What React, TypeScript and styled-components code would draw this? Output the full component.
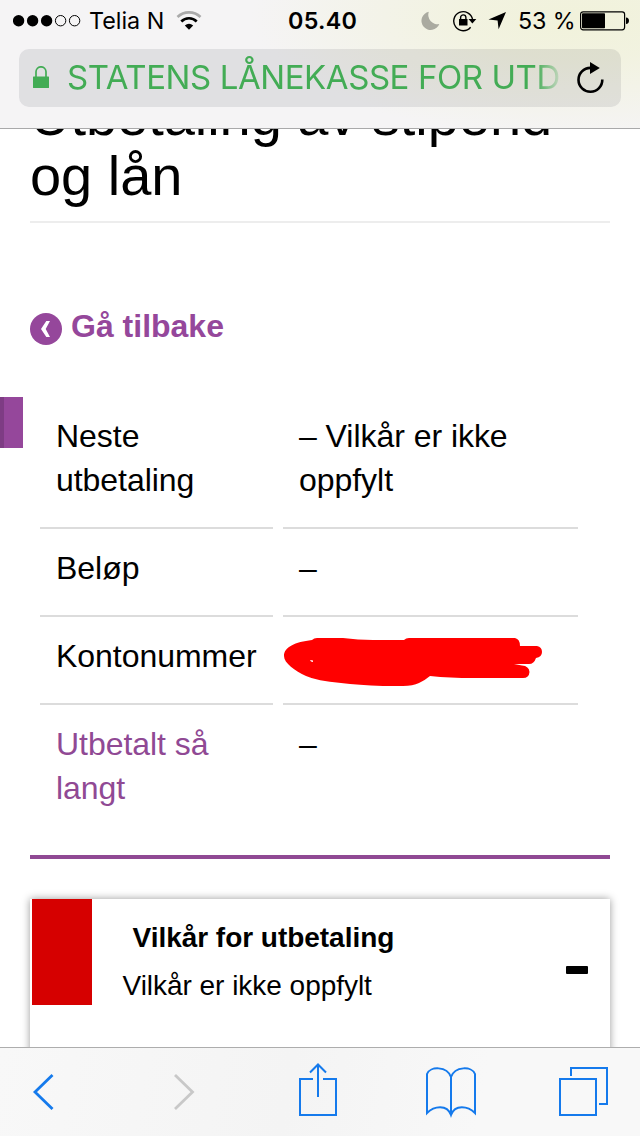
import React from "react";
import styled, { createGlobalStyle } from "styled-components";

const purple = "#95479b";
const blue = "#157aec";
const bodyFont = '"Liberation Sans", Arial, sans-serif';
const systemFont = 'Inter, Roboto, sans-serif';

const GlobalStyle = createGlobalStyle`
  * { box-sizing: border-box; }
  body { margin: 0; background: #fff; color: #000; }
  svg { display: block; flex: none; }
`;

const Screen = styled.div`
  width: 640px;
  height: 1136px;
  display: flex;
  flex-direction: column;
  overflow: hidden;
  font-family: ${bodyFont};
`;

const BrowserHeader = styled.header`
  flex: none;
  height: 129px;
  border-bottom: 1px solid #a9a9aa;
  background:
    radial-gradient(ellipse 330px 120px at 580px 18px, #f1f2db 0%, rgba(241, 242, 219, 0.8) 35%, rgba(241, 242, 219, 0) 100%),
    #f5f4f5;
  font-family: ${systemFont};
`;

const StatusBar = styled.div`
  height: 49px;
  display: grid;
  grid-template-columns: 288px 133px 1fr;
  align-items: start;
`;

const StatusGroup = styled.div<{ $left?: number }>`
  height: 41px;
  display: flex;
  align-items: center;
  padding-left: ${(p) => p.$left ?? 0}px;
`;

const StatusText = styled.span<{ $width: number; $strong?: boolean; $spacing?: number }>`
  flex: none;
  width: ${(p) => p.$width}px;
  font-size: 23.3px;
  line-height: 41px;
  font-weight: ${(p) => (p.$strong ? 600 : 400)};
  letter-spacing: ${(p) => p.$spacing ?? 0}px;
  white-space: nowrap;
`;

const AddressBar = styled.div`
  height: 58px;
  margin: 0 19px;
  padding: 0 16px 0 14px;
  display: flex;
  align-items: center;
  border-radius: 10px;
  background: rgba(10, 15, 30, 0.085);
`;

const SiteName = styled.span`
  width: 494px;
  margin: 0 17px;
  overflow: hidden;
  white-space: nowrap;
  font-size: 33px;
  line-height: 54px;
  height: 56px;
  letter-spacing: -0.43px;
  color: #43ac55;
  mask-image: linear-gradient(to right, #000 468px, transparent 498px);
`;

const Page = styled.main`
  flex: 1;
  min-height: 0;
  overflow: hidden;
  padding: 0 30px;
`;

const Title = styled.h1`
  margin: -43px 0 0;
  height: 137px;
  font-size: 56px;
  line-height: 60px;
  font-weight: 400;
  letter-spacing: -0.04px;
  border-bottom: 2px solid #ededed;
`;

const BackLink = styled.a`
  height: 44px;
  margin-top: 81px;
  display: flex;
  align-items: center;
  gap: 9px;
  color: ${purple};
  font-size: 32px;
  line-height: 44px;
  font-weight: 700;
`;

const BackBadge = styled.span`
  width: 32px;
  height: 32px;
  margin-top: 6px;
  border-radius: 50%;
  background: ${purple};
`;

const Summary = styled.section`
  position: relative;
  height: 462px;
  margin-top: 49px;
  padding: 0 32px 0 10px;
  border-bottom: 4px solid #904994;
`;

const SideTab = styled.div`
  position: absolute;
  left: -30px;
  top: 0;
  width: 23px;
  height: 51px;
  background: ${purple};
  border-left: 4px solid #7e3c84;
`;

const SummaryRow = styled.div`
  display: grid;
  grid-template-columns: 233px 295px;
  column-gap: 10px;
`;

const Cell = styled.div<{ $accent?: boolean; $last?: boolean }>`
  padding: 17px 16px 25px;
  font-size: 32px;
  line-height: 44px;
  letter-spacing: -0.04px;
  color: ${(p) => (p.$accent ? "#904994" : "#000")};
  border-bottom: 2px solid ${(p) => (p.$last ? "transparent" : "#dcdcdc")};
`;

const Scribble = styled.svg`
  margin: -8px 0 -10px -16px;
  overflow: visible;
`;

const Card = styled.section`
  height: 220px;
  margin-top: 40px;
  padding: 0 22px 0 2px;
  display: flex;
  background: #fff;
  box-shadow: 0 0 8px rgba(0, 0, 0, 0.4);
`;

const CardFlag = styled.div`
  width: 60px;
  height: 106px;
  background: #d60000;
`;

const CardText = styled.div`
  flex: 1;
  padding: 15px 0 0 30.5px;
  font-size: 28px;
  line-height: 48px;
  letter-spacing: -0.03px;
`;

const CardTitle = styled.h2`
  margin: 0;
  padding-left: 10px;
  font-size: 28px;
  line-height: 48px;
  font-weight: 700;
`;

const Minus = styled.span`
  width: 22px;
  height: 8px;
  margin-top: 67px;
  border-radius: 1px;
  background: #000;
`;

const Toolbar = styled.nav`
  flex: none;
  height: 89px;
  padding: 13px 28px 0;
  display: grid;
  grid-template-columns: 140px 130px 127px 133px 54px;
  align-items: start;
  border-top: 1px solid #adadad;
  background: linear-gradient(100deg, #f8f8f8, #f4f4f4 45%, #f8f8f8 75%);
`;

const ToolIcon = styled.svg`
  fill: none;
  stroke: ${blue};
  stroke-width: 2;
`;

const Signal = () => (
  <svg width="76" height="14" viewBox="0 0 76 14">
    {[0, 1, 2].map((i) => (
      <circle key={i} cx={5.6 + i * 14} cy="6.7" r="5.7" />
    ))}
    {[3, 4].map((i) => (
      <circle key={i} cx={5.6 + i * 14} cy="6.7" r="5.2" fill="none" stroke="#000" strokeWidth="1" />
    ))}
  </svg>
);

const Wifi = () => (
  <svg width="26" height="20" viewBox="0 0 26 20" fill="none" strokeWidth="2.6">
    <path d="M1.500 6 A16.500 16.500 0 0 1 24.500 6" stroke="#aaa" />
    <path d="M5.300 10.500 A10.800 10.800 0 0 1 20.700 10.500" stroke="#000" />
    <path d="M8.800 14.600 Q13 10.800 17.200 14.600 L13 18.800Z" fill="#000" />
  </svg>
);

const Moon = () => (
  <svg width="19" height="20" viewBox="0 0 19 20">
    <path d="M7.800 0.800 A9.200 9.200 0 1 0 18.300 13 A9.300 9.300 0 0 1 7.800 0.800Z" fill="#aaaaa0" />
  </svg>
);

const RotationLock = () => (
  <svg width="24" height="22" viewBox="0 0 24 22" fill="none" stroke="#000">
    <path d="M17.600 17.200 A9.500 9.500 0 1 1 19.600 9.500" strokeWidth="1.4" />
    <path d="M15.500 9 H23.300 L19.400 13.500Z" fill="#000" stroke="none" />
    <rect x="6" y="9" width="8.500" height="6.500" fill="#000" stroke="none" />
    <path d="M7.600 10 V7.500 A2.650 2.650 0 0 1 12.900 7.500 V10" strokeWidth="1.4" />
  </svg>
);

const LocationArrow = () => (
  <svg width="18" height="19" viewBox="0 0 18 19">
    <path d="M18 1 L10.600 18.300 L9.600 9.500 L0.500 8.600Z" />
  </svg>
);

const Battery = () => (
  <svg width="50" height="20" viewBox="0 0 50 20">
    <rect x="0.600" y="0.800" width="44" height="18" rx="2.500" fill="none" stroke="#000" strokeWidth="1.200" />
    <rect x="2" y="2.200" width="23" height="15" rx="0.800" />
    <path d="M46 6.500 Q49 6.800 49 9.800 Q49 12.800 46 13.100Z" />
  </svg>
);

const Padlock = () => (
  <svg width="17" height="24" viewBox="0 0 17 24">
    <rect x="0" y="10.500" width="16" height="11.500" rx="0.500" fill="#43ac55" />
    <path d="M3 11 V5.800 A5 5 0 0 1 13 5.800 V11" fill="none" stroke="#43ac55" strokeWidth="1.700" />
  </svg>
);

const Reload = () => (
  <svg width="28" height="32" viewBox="0 0 28 32">
    <path d="M25.300 17.500 A11.900 11.900 0 1 1 13.400 5.900 H15" fill="none" stroke="#000" strokeWidth="2.600" />
    <path d="M13 0 V12 L22.800 5.900Z" />
  </svg>
);

export default function App() {
  return (
    <Screen>
      <GlobalStyle />
      <BrowserHeader>
        <StatusBar>
          <StatusGroup $left={13}>
            <Signal />
            <StatusText $width={87}>Telia N</StatusText>
            <Wifi />
          </StatusGroup>
          <StatusGroup>
            <StatusText $width={90} $strong $spacing={0.3}>05.40</StatusText>
          </StatusGroup>
          <StatusGroup>
            <Moon />
            <StatusGroup $left={13}><RotationLock /></StatusGroup>
            <StatusGroup $left={11}><LocationArrow /></StatusGroup>
            <StatusGroup $left={12}><StatusText $width={62} $spacing={-0.1}>53 %</StatusText></StatusGroup>
            <Battery />
          </StatusGroup>
        </StatusBar>
        <AddressBar>
          <Padlock />
          <SiteName>STATENS LÅNEKASSE FOR UTD</SiteName>
          <Reload />
        </AddressBar>
      </BrowserHeader>

      <Page>
        <Title>Utbetaling av stipend og lån</Title>
        <BackLink>
          <BackBadge>
            <svg width="32" height="32" viewBox="0 0 32 32">
              <path d="M16.300 8 H20 L15.700 16 L20 24 H16.300 L11 16Z" fill="#fff" />
            </svg>
          </BackBadge>
          Gå tilbake
        </BackLink>

        <Summary>
          <SideTab />
          <SummaryRow>
            <Cell>Neste utbetaling</Cell>
            <Cell>– Vilkår er ikke oppfylt</Cell>
          </SummaryRow>
          <SummaryRow>
            <Cell>Beløp</Cell>
            <Cell>–</Cell>
          </SummaryRow>
          <SummaryRow>
            <Cell>Kontonummer</Cell>
            <Cell>
              <Scribble width="262" height="62" viewBox="0 0 262 62">
                <path
                  fill="#f00"
                  d="M1 30 C1 21 12 16 29 14 Q31 12 34 12 H60 Q75 14 90 14 H121 Q123 12 126 12 H232 Q237 13 237 20 H254 Q259 21 259 26 Q259 31 253 32 Q251 38 246 38 H231 L239 39.5 Q246 40 246.500 46 Q246 52 240 52 H190 Q167 52 147 50 Q141 55 136 57 Q130 60 120 60 H100 Q75 59 58 57 Q34 55 23 50 C12 45 1 37 1 30Z"
                />
                <path d="M27 34 L30 34.5 V36 L28 35.5Z" fill="#fff" />
              </Scribble>
            </Cell>
          </SummaryRow>
          <SummaryRow>
            <Cell $accent $last>Utbetalt så langt</Cell>
            <Cell $last>–</Cell>
          </SummaryRow>
        </Summary>

        <Card>
          <CardFlag />
          <CardText>
            <CardTitle>Vilkår for utbetaling</CardTitle>
            Vilkår er ikke oppfylt
          </CardText>
          <Minus />
        </Card>
      </Page>

      <Toolbar>
        <ToolIcon width="30" height="60" viewBox="28 1061 30 60">
          <path d="M52.500 1075 L35 1092 L52.500 1109" strokeWidth="2.8" />
        </ToolIcon>
        <ToolIcon width="30" height="60" viewBox="168 1061 30 60">
          <path d="M175 1075 L192.500 1092 L175 1109" stroke="#c8c8c8" strokeWidth="2.8" />
        </ToolIcon>
        <ToolIcon width="40" height="60" viewBox="298 1061 40 60">
          <path d="M313 1079 H300 V1115 H336 V1079 H323 M318 1097 V1065 M310 1072.500 L318 1064.500 L326 1072.500" />
        </ToolIcon>
        <ToolIcon width="52" height="60" viewBox="425 1061 52 60">
          <path d="M451 1077 C447 1066 430 1066 427 1074 V1113 C434 1106 447 1104 451 1115 C455 1104 468 1106 475 1113 V1074 C472 1066 455 1066 451 1077 V1115" />
        </ToolIcon>
        <ToolIcon width="54" height="60" viewBox="558 1061 54 60">
          <path d="M560 1079 H596 V1115 H560Z M571 1076 V1068 H607 V1104 H599" />
        </ToolIcon>
      </Toolbar>
    </Screen>
  );
}
